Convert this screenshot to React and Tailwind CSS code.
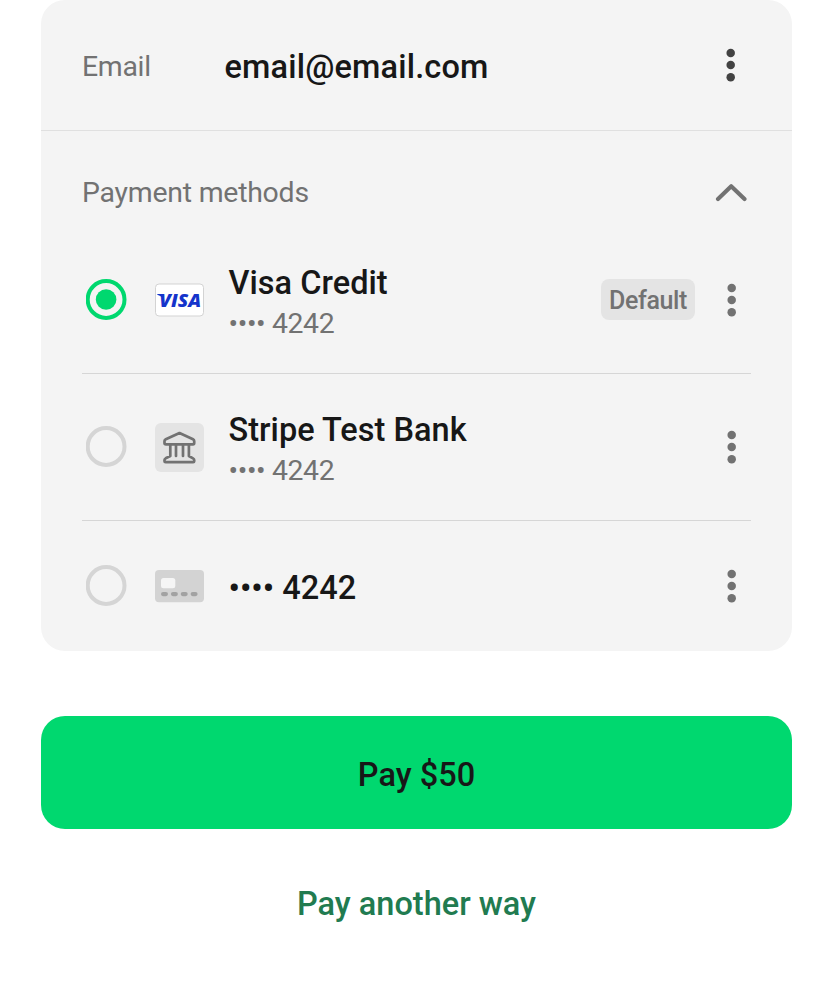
function Kebab({ className }) {
  return (
    <svg className={`h-[42px] w-[12px] shrink-0 ${className}`} viewBox="0 0 12 42" fill="currentColor">
      <circle cx="5.7" cy="8.9" r="4.25" />
      <circle cx="5.7" cy="21.1" r="4.25" />
      <circle cx="5.7" cy="33.3" r="4.25" />
    </svg>
  );
}

function Radio({ checked }) {
  return (
    <svg className="h-[42px] w-[42px] shrink-0" viewBox="0 0 42 42" fill="none">
      <circle cx="20.1" cy="20.5" r="18.4" stroke={checked ? "#00d86f" : "#d5d5d5"} strokeWidth="4" />
      {checked && <circle cx="20.1" cy="20.5" r="10.3" fill="#00d86f" />}
    </svg>
  );
}

function VisaIcon() {
  return (
    <svg className="h-[49px] w-[49px] shrink-0" viewBox="0 0 49 49">
      <rect x="0.5" y="9" width="48" height="32" rx="3.5" fill="#fff" stroke="#d3d3d3" />
      <path d="M2.3 19.1H8L9.3 26C8.2 22.6 5.8 20.6 2.3 19.7Z" fill="#1434cb" />
      <text
        x="4.3"
        y="32.2"
        className="font-['Open_Sans',sans-serif] text-[18.3px] font-extrabold italic"
        textLength="41.8"
        lengthAdjust="spacingAndGlyphs"
        fill="#1434cb"
      >
        VISA
      </text>
    </svg>
  );
}

function BankIcon() {
  return (
    <svg className="h-[49px] w-[49px] shrink-0" viewBox="0 0 49 49" fill="none">
      <rect width="49" height="49" rx="6" fill="#e4e4e4" />
      <g stroke="#727272" strokeWidth="2.7" strokeLinejoin="round" strokeLinecap="round">
        <path d="M24.5 10L38 16.3Q39.2 16.9 39.2 18V20.2Q39.2 21.3 38 21.3H11Q9.5 21.3 9.5 20.2V18Q9.5 16.9 10.8 16.3Z" />
        <path d="M15.3 22V33L10.7 35.3Q9.5 36 9.5 37V38.2Q9.5 39.2 10.6 39.2H38.2Q39.2 39.2 39.2 38.2V37Q39.2 36 38 35.3L33.9 33V22" />
        <path d="M21 22V33M28 22V33" />
      </g>
    </svg>
  );
}

function CardIcon() {
  return (
    <svg className="h-[49px] w-[49px] shrink-0" viewBox="0 0 49 49">
      <rect y="8" width="49" height="32.3" rx="4" fill="#d3d3d3" />
      <rect x="6" y="16" width="14.3" height="10.3" rx="2.5" fill="#f5f5f5" />
      <g fill="#a2a2a2">
        <rect x="6" y="30" width="7" height="4.2" rx="2.1" />
        <rect x="15.9" y="30" width="7" height="4.2" rx="2.1" />
        <rect x="25.7" y="30" width="7" height="4.2" rx="2.1" />
        <rect x="35.6" y="30" width="7" height="4.2" rx="2.1" />
      </g>
    </svg>
  );
}

function Method({ checked, icon, title, sub, badge, className, textClass }) {
  return (
    <div className={`mx-[41px] flex items-center pl-1 pr-[13px] ${className}`}>
      <Radio checked={checked} />
      <div className="ml-[27px] shrink-0">{icon}</div>
      <div className={`ml-[25px] flex-1 whitespace-nowrap ${textClass}`}>
        <div className="-ml-[0.5px] text-[32.5px] font-medium leading-[42px] tracking-[0.03px] text-[#171717]">{title}</div>
        {sub && <div className="-ml-[0.5px] text-[28.4px] leading-[40px] tracking-[-0.38px] text-[#727272]">{sub}</div>}
      </div>
      {badge && (
        <span className="mr-[31px] flex h-[41px] w-[94px] items-center justify-center rounded-lg bg-[#e4e4e4] pt-[3px] text-[25px] font-medium tracking-[-0.4px] text-[#727272]">
          {badge}
        </span>
      )}
      <Kebab className="text-[#727272]" />
    </div>
  );
}

export default function App() {
  return (
    <main className="flex h-[1000px] w-[833px] flex-col items-center bg-white font-[Roboto,sans-serif]">
      <section className="h-[651px] w-[751px] rounded-3xl bg-[#f4f4f4]">
        <div className="flex h-[131px] items-center border-b border-[#e0e0e0] pl-[41px] pr-[55px]">
          <span className="w-[142px] pt-[5px] text-[28.4px] tracking-[-0.3px] text-[#727272]">Email</span>
          <span className="flex-1 pl-[0.5px] pt-[5px] text-[32.5px] font-medium tracking-[0.17px] text-[#171717]">email@email.com</span>
          <Kebab className="text-[#424242]" />
        </div>
        <div className="flex h-[95px] items-center pl-[41px] pr-[45px] pt-[29px]">
          <h2 className="flex-1 text-[28.4px] leading-[40px] tracking-[-0.22px] text-[#727272]">Payment methods</h2>
          <svg className="h-5 w-8" viewBox="0 0 32 20" fill="none">
            <path d="M3 16L16.2 3.2L29.5 16" stroke="#727272" strokeWidth="4.1" strokeLinecap="round" strokeLinejoin="round" />
          </svg>
        </div>
        <Method checked icon={<VisaIcon />} title="Visa Credit" sub="•••• 4242" badge="Default" className="h-[148px] border-b border-[#d6d6d6]" textClass="pt-[7px]" />
        <Method icon={<BankIcon />} title="Stripe Test Bank" sub="•••• 4242" className="h-[147px] border-b border-[#d6d6d6]" textClass="pt-[6px]" />
        <Method icon={<CardIcon />} title="•••• 4242" className="h-[130px]" textClass="pt-[3px]" />
      </section>
      <button className="mt-[65px] h-[113px] w-[751px] rounded-3xl bg-[#00d86f] pt-[5px] text-[32.5px] font-medium text-[#171717]">
        Pay $50
      </button>
      <button className="mt-[49px] h-[52px] text-[32.5px] font-medium text-[#217b50]">Pay another way</button>
    </main>
  );
}
